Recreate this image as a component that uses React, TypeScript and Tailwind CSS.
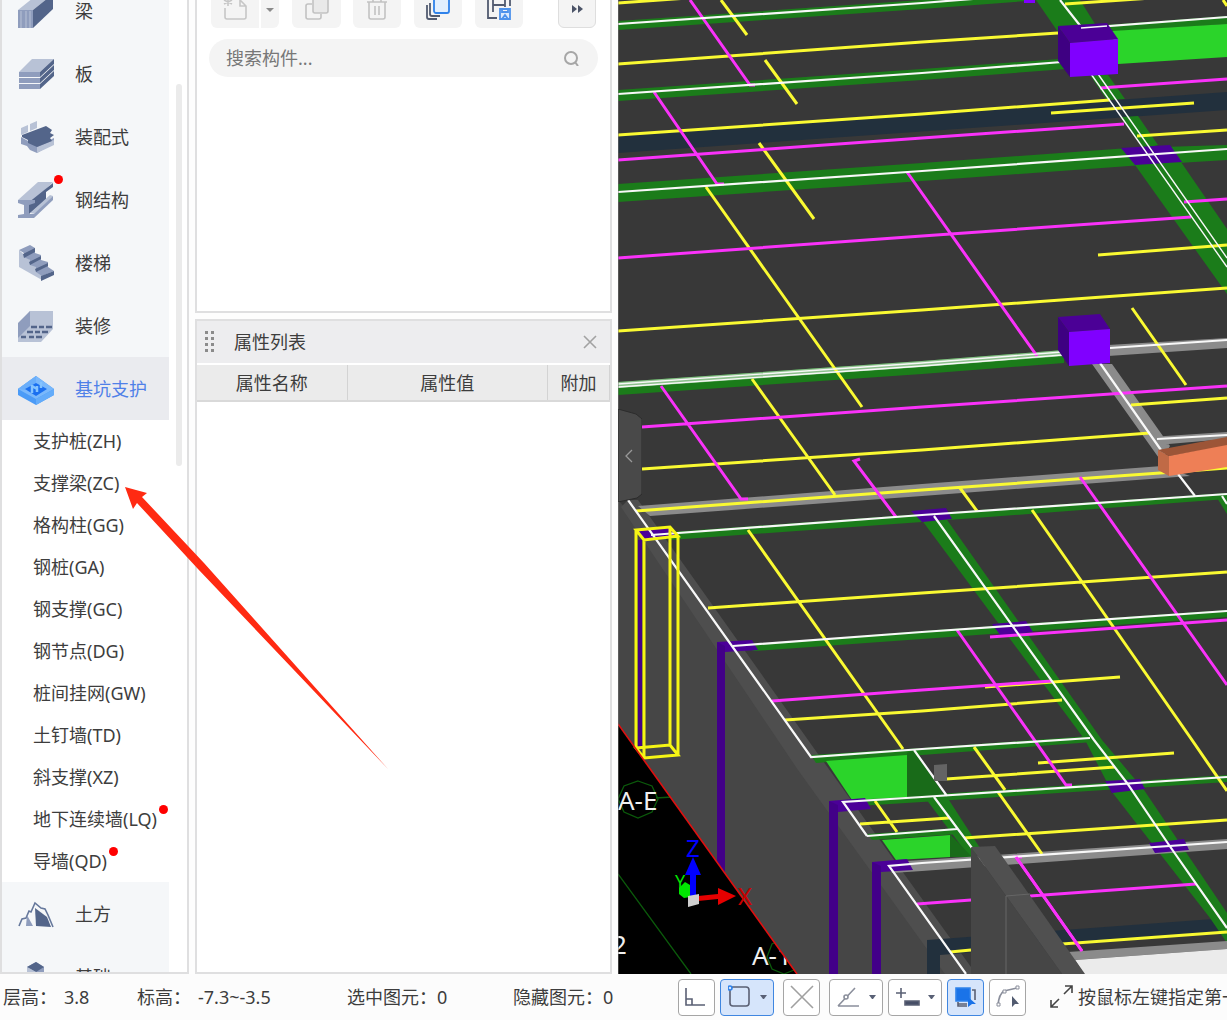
import type { ReactNode } from 'react';
import clsx from 'clsx';

const LIGHT = '#b8c2d6';
const MID = '#8f9dbd';
const DARK = '#53658a';

const icons: Record<string, ReactNode> = {
  beam: (
    <>
      <path d="M0 17 20 1h15L15 17z" fill={LIGHT} />
      <path d="M15 17 35 1v15L15 35z" fill={DARK} />
      <path d="M0 17h15v18H0z" fill={MID} />
      <path d="M3 18v17M8 18v17M12 18v17" stroke={LIGHT} strokeWidth="1" />
    </>
  ),
  slab: (
    <>
      <path d="M1 16 14 3h22L22 16z" fill={LIGHT} />
      <path d="M1 16h21v5H1zM1 22h21v5H1zM1 28h21v5H1z" fill={MID} />
      <path d="M22 16 36 3v5L22 21zM22 22 36 9v5L22 27zM22 28 36 15v5L22 33z" fill={DARK} />
    </>
  ),
  prefab: (
    <>
      <path d="M3 9l7-3v7l-7 3zM12 5l7-3v7l-7 3z" fill={LIGHT} />
      <path d="M3 18l16 9 17-8v5l-17 10-7-3-3-4-6-2z" fill={MID} />
      <path d="M19 28l17-7v5l-17 8z" fill={LIGHT} />
      <path d="M4 16 28 7l6 4-2 3 4 2-4 3 2 3-15 6-9-4v-3l-6-3z" fill={DARK} />
    </>
  ),
  steel: (
    <>
      <path d="M0 18 20 0h15L17 18z" fill={LIGHT} />
      <path d="M10 21 35 1v4l-7 5v8L11 32z" fill={DARK} />
      <path d="M0 18h17v3l-6 2v9h5v4H0v-3l6-1v-9l-6-2z" fill={MID} />
      <path d="M12 31 32 13l3 1-18 18z" fill={LIGHT} />
      <path d="M16 32 35 14v4L16 36z" fill={MID} />
    </>
  ),
  stairs: (
    <>
      <path d="M1 5v17l23 13v-9z" fill={LIGHT} />
      <path d="M1 5 12 0l5 3v5l6 2v5l7 2v5l6 4-12 5-6-4v-5l-6-2v-5l-6-3V8z" fill={MID} />
      <path d="M5 9l12-6v4L6 13zM11 17l12-6v3l-11 6zM17 24l13-6v3l-12 6zM23 31l13-5v4l-13 6z" fill={DARK} />
    </>
  ),
  finish: (
    <>
      <path d="M12 3h23v18L23 34H0V19z" fill={LIGHT} />
      <path d="M12 3v15L0 30V15z" fill={MID} />
      <path
        d="M13 19h6M21 19h5M28 19h6M9 24h6M17 24h5M24 24h6M3 29h5M11 29h5M18 29h6"
        stroke={DARK}
        strokeWidth="2.5"
      />
    </>
  ),
  pit: (
    <>
      <path d="M0 18 18 5l18 13v6L18 34 0 24z" fill="#4b9bf7" />
      <path d="M0 18 18 5l18 13-18 10z" fill="#7ab8fb" />
      <path d="M18 5v10L7 19l-7-1z" fill="#6aaefa" />
      <path d="M7 18l11-6 11 6-11 7z" fill="#1a6ff0" />
      <path d="M14 14v8M19 15v6M23 11v6M14 15l5 3" stroke="#84c3ff" strokeWidth="2.5" />
      <path d="M18 28 36 18v6L18 34z" fill="#64acfa" />
    </>
  ),
  earth: (
    <>
      <path d="M1 30l3-7 4-1 3-7 2 1 4-9 6 5 4 1 3 6 5 12" fill="none" stroke="#66789c" strokeWidth="1.6" />
      <path d="M17 12l8 6 4 3 4 10-15-1z" fill={DARK} />
      <path d="M9 19l6 11H8z" fill={MID} />
    </>
  ),
  foundation: (
    <>
      <path d="M9 8l9-5 8 5v14H9z" fill={MID} />
      <path d="M9 8l9-5 8 5-8 5z" fill={DARK} />
      <path d="M9 8l9 5v9H9z" fill={LIGHT} />
    </>
  ),
};

const categories = [
  { icon: 'beam', label: '梁' },
  { icon: 'slab', label: '板' },
  { icon: 'prefab', label: '装配式' },
  { icon: 'steel', label: '钢结构', isNew: true },
  { icon: 'stairs', label: '楼梯' },
  { icon: 'finish', label: '装修' },
  { icon: 'pit', label: '基坑支护', active: true },
];

const pitItems = [
  { label: '支护桩(ZH)' },
  { label: '支撑梁(ZC)' },
  { label: '格构柱(GG)' },
  { label: '钢桩(GA)' },
  { label: '钢支撑(GC)' },
  { label: '钢节点(DG)' },
  { label: '桩间挂网(GW)' },
  { label: '土钉墙(TD)' },
  { label: '斜支撑(XZ)' },
  { label: '地下连续墙(LQ)', isNew: true },
  { label: '导墙(QD)', isNew: true },
];

function NewDot({ className }: { className?: string }) {
  return <span className={clsx('absolute size-[9px] rounded-full bg-[#ff0000]', className)} />;
}

type CategoryProps = { icon: string; label: string; isNew?: boolean; active?: boolean };

function Category({ icon, label, isNew, active }: CategoryProps) {
  return (
    <button
      className={clsx(
        'flex h-[63px] w-full shrink-0 items-center pl-4 text-left',
        active ? 'bg-[#eaebef] text-[#4f80e8]' : 'bg-[#f5f7f9]'
      )}
    >
      <span className="relative mr-[21px]">
        <svg className="size-9" viewBox="0 0 36 36">{icons[icon]}</svg>
        {isNew && <NewDot className="-top-[7px] left-9" />}
      </span>
      {label}
    </button>
  );
}

function Sidebar() {
  return (
    <nav className="flex w-[189px] shrink-0 overflow-hidden border-2 border-t-0 border-[#dfdfe0] bg-white">
      <div className="-mt-[21px] flex w-[167px] flex-col">
        {categories.map((c) => (
          <Category key={c.label} {...c} />
        ))}
        <ul className="shrink-0 pl-[31px]">
          {pitItems.map((item) => (
            <li key={item.label} className="flex h-[42px] items-center">
              <button className="relative whitespace-nowrap">
                {item.label}
                {item.isNew && <NewDot className="-right-[11px] -top-[2px]" />}
              </button>
            </li>
          ))}
        </ul>
        <Category icon="earth" label="土方" />
        <Category icon="foundation" label="基础" />
      </div>
      <div className="ml-[7px] mt-[84px] h-[382px] w-[6px] rounded-full bg-[#ebebeb]" />
    </nav>
  );
}

function ToolButton({ label, className, children }: { label: string; className?: string; children: ReactNode }) {
  return (
    <button aria-label={label} className={clsx('flex h-[40px] items-end justify-center rounded-md bg-[#f4f4f4] pb-2', className)}>
      {children}
    </button>
  );
}

function ComponentPanel() {
  return (
    <section className="h-[313px] shrink-0 overflow-hidden border-2 border-t-0 border-[#dfdfe0] bg-white px-3">
      <div className="-mt-3 flex px-[2px]">
        <ToolButton label="新建" className="w-12 rounded-r-none">
          <svg className="h-6 w-6" viewBox="0 0 24 24" fill="none" stroke="#c6c6c6" strokeWidth="1.6">
            <path d="M2 12v9q0 2 2 2h17q2 0 2-2V10l-6-6M17 4v6h6M1 4l8 4M9 4l-8 4M5 2v8" />
          </svg>
        </ToolButton>
        <ToolButton label="更多新建" className="ml-[2px] w-[18px] rounded-l-none">
          <svg className="mb-2 h-1 w-2" viewBox="0 0 8 4"><path d="M0 0h8L4 4z" fill="#8a8a8a" /></svg>
        </ToolButton>
        <ToolButton label="复制" className="ml-[13px] w-[49px]">
          <svg className="h-6 w-6" viewBox="0 0 24 24" fill="#e9e9e9" stroke="#c2c2c2" strokeWidth="1.6">
            <path d="M7 8H3q-2 0-2 2v11q0 2 2 2h11q2 0 2-2v-3" fill="none" />
            <rect x="8" y="1" width="15" height="16" rx="2" />
          </svg>
        </ToolButton>
        <ToolButton label="删除" className="ml-3 w-12">
          <svg className="h-6 w-5" viewBox="0 0 20 24" fill="none" stroke="#c2c2c2" strokeWidth="1.6">
            <path d="M0 6h20M2 6v15q0 2 2 2h12q2 0 2-2V6M6 6V2h8v4M8 10v9M12 10v9" />
          </svg>
        </ToolButton>
        <ToolButton label="层间复制" className="ml-[13px] w-12">
          <svg className="h-6 w-6" viewBox="0 0 24 24" fill="none" stroke="#525b70" strokeWidth="1.8">
            <path d="M1 9v12q0 2 2 2h8M4 7v11q0 2 2 2h8" />
            <rect x="8" y="0" width="15" height="17" rx="2" fill="#e2effe" stroke="#2f82ea" />
          </svg>
        </ToolButton>
        <ToolButton label="存档" className="ml-[13px] w-12">
          <svg className="h-6 w-6" viewBox="0 0 24 24" fill="none" stroke="#525b70" strokeWidth="1.8">
            <path d="M1 0v22h9M6 0v16M6 9h12M18 2v9M23 0v10" />
            <path d="M13 13h10v10H13zM15 13v3h6v-3M15 23l3-4 3 4" fill="#dceafd" stroke="#4d92ec" />
          </svg>
        </ToolButton>
        <ToolButton label="展开" className="ml-auto w-[38px] border border-[#dedede]">
          <svg className="mb-[6px] h-2 w-[11px]" viewBox="0 0 11 8"><path d="M0 0l5 4-5 4zM6 0l5 4-5 4z" fill="#4c5468" /></svg>
        </ToolButton>
      </div>
      <div className="mt-[11px] flex h-[38px] items-center rounded-full bg-[#f4f4f4] px-[17px]">
        <input
          aria-label="搜索构件"
          placeholder="搜索构件..."
          className="min-w-0 flex-1 bg-transparent outline-none placeholder:text-[#777]"
        />
        <svg className="mr-[2px] size-[15px]" viewBox="0 0 15 15" fill="none" stroke="#a6a6a6" strokeWidth="2">
          <circle cx="7" cy="7" r="6" />
          <path d="M11 11l3 4" />
        </svg>
      </div>
    </section>
  );
}

function PropertyPanel() {
  return (
    <section className="mt-[6px] min-h-0 flex-1 border-2 border-[#dfdfe0] bg-white">
      <header className="flex h-[42px] items-center bg-[#ededef] pl-2 pr-3">
        <svg className="mr-[18px] h-[22px] w-[11px]" viewBox="0 0 11 22" fill="#8b8b8b">
          <path d="M0 0h3v3H0zM6 0h3v3H6zM0 6h3v3H0zM6 6h3v3H6zM0 12h3v3H0zM6 12h3v3H6zM0 18h3v3H0zM6 18h3v3H6z" />
        </svg>
        <h2>属性列表</h2>
        <button aria-label="关闭" className="ml-auto">
          <svg className="size-4" viewBox="0 0 16 16" stroke="#a2a2a2" strokeWidth="1.6"><path d="M2 2l12 12M14 2 2 14" /></svg>
        </button>
      </header>
      <table className="mt-[2px] w-full table-fixed border-collapse bg-[#ebebeb]">
        <thead>
          <tr className="h-[36px] border-b-2 border-[#d9d9d9]">
            <th scope="col" className="w-[150px] border-r border-[#d3d3d3] font-normal">属性名称</th>
            <th scope="col" className="border-r border-[#d3d3d3] font-normal">属性值</th>
            <th scope="col" className="w-[62px] border-r border-[#d3d3d3] font-normal">附加</th>
          </tr>
        </thead>
      </table>
    </section>
  );
}

const PURPLE = '#4b0098';
const GREEN = '#1b7c1a';
const BRIGHT = '#2bd42a';
const GRAY = '#8b8b8b';

// Model space view: ground and slabs first, then beams, rebar lines and columns.
function Model() {
  return (
    <svg className="absolute inset-0 h-full w-full" viewBox="618 0 609 974" preserveAspectRatio="xMinYMin slice">
      {/* ground with axis labels */}
      <path d="M618 0h609v974H618z" />
      <g fill="none" stroke="#0b5a0b" strokeWidth="1.3">
        <path d="M638 781l14 5 6 13-6 13-14 6-14-6-6-13 6-13zM656 798l16-1M618 874l73 100M784 939l-12 5-5 13 5 12 12 5 10-4" />
      </g>
      <g fill="#f0f0f0" fontSize="26">
        <text x="618" y="810">A-E</text>
        <text x="752" y="965">A-1</text>
        <text x="612" y="954">2</text>
      </g>

      {/* floor and outer wall */}
      <path d="M618 0h609v974H797L618 724z" fill="#383838" />
      <path d="M618 500 650 535 960 974H797L618 724z" fill="#464646" />
      <path d="M621 507 628 500h10L818 754 976 974h-31L798 770z" fill="#4e4e4e" />

      <g fill="#22303d">
        <path d="M618 136 1227 92v18L618 153z" />
        <path d="M927 940l300-22v14L940 955v19h-13z" />
      </g>

      <g fill={GREEN}>
        <path d="M618 21 922 0l105-8v9L922 9 618 30z" />
        <path d="M618 90 922 69l138-10 6 10-144 11-304 21z" />
        <path d="M618 184 922 163l207-15 98-3v15l-98 6-207 15-304 21z" />
        <path d="M618 382 922 361l142-11v13L922 374 618 395z" />
        <path d="M1036 0h44l15 24-37 8zM1106 25l121-9v8l-121 8z" />
        <path d="M1090 75h18l17 24-18 1zM1122 117l16-1 20 29-14 4zM1135 165l46-3 46 67v65z" />
        <path d="M670 532 922 514l305-21v6L922 522 670 540z" />
        <path d="M735 646 922 631l305-21v7L922 639 755 651z" />
        <path d="M921 519 945 517l157 223 42 50 83 123v30l-17-25-98-126-27-52z" />
        <path d="M1217 498h10v16z" />
        <path d="M811 755 922 748l168-12 3 6-171 13-106 8z" />
        <path d="M852 800 922 795l305-20v7L922 802l-64 4z" />
        <path d="M926 799l21-2 33 51-9 11zM867 834l90-6v6l-85 6z" />
      </g>
      <path d="M907 753l7-3 31 46-38 2zM950 834l22 23h-22z" fill="#196b19" />
      <path d="M1112 31 1227 24v33l-109 7zM826 761l81-6v42l-55 3zM882 840l68-5v22l-54 3z" fill={BRIGHT} />

      <g fill={GRAY}>
        <path d="M638 506 922 484l240-18 28 10-268 20-272 20z" />
        <path d="M1108 345 1227 338v10l-119 8zM1092 364h20l58 82-9 15zM1150 437l77-5v7l-70 6z" />
        <path d="M889 862 922 860l305-21v10L922 871l-30 2zM1068 952l159-11v8l-153 11z" />
      </g>
      <path d="M1075 960 1227 949v25H1084z" fill="#ebebeb" />
      <path d="M618 385 922 364l142-11" stroke="#8cc08c" strokeWidth="6" fill="none" />

      <g fill={PURPLE}>
        <path d="M1024 0h11v3h-11z" fill="#8000ff" />
        <path d="M1121 148 1170 145l12 17-47 3z" />
        <path d="M911 511l35-3 6 11-30 3zM992 624l34-3 7 11-32 4zM1105 781l35-2 5 10-33 4zM1149 843l35-4 5 11-34 3z" />
        <path d="M638 531l32-3 6 9-32 3zM717 642l35-2 6 10-33 2zM829 801l36-3 6 11-33 3zM872 862l35-3 6 11-32 2z" />
        <path d="M638 540h4v208h-4zM717 642l8 4v227l-8-12zM829 801l9 4v169h-9zM872 862l9 4v108h-9z" fill="#420088" />
      </g>

      <g fill="none" stroke="#fafa32" strokeWidth="3">
        <path d="M618 3 688-2M618 64 922 42l136-9M618 135 922 114l188-14M1051 113 1194 103M1065 4l87-6M1223 0l4 6" />
        <path d="M721 0l26 35M765 60l32 44M759 143l55 76M706 187l156 220M1137 136l90-6M1098 255l129-10" />
        <path d="M618 331 922 310l305-22M642 469 922 450l228-17M752 379l83 116M1132 308l54 77M1131 405l96-7" />
        <path d="M636 511 922 490l238-17 67-5M960 488l17 23M748 530 903 749M708 608 922 593l305-21M1032 510l160 230 35 51" />
        <path d="M785 720l137-9 140-11M985 687l135-10M1038 763l136-10M946 779l169-12M974 747l31 43M998 792l44 62" />
        <path d="M875 801l22 31M860 824l89-6M964 838l263-18M950 952l21-2M1062 944l165-12" />
      </g>

      <g fill="none" stroke="#fa32fa" strokeWidth="3">
        <path d="M690 0l60 85h5M618 160 922 138l202-14M654 92l63 92h7M618 258 922 236l269-19M1184 202l43-3M1100 88l127-9" />
        <path d="M907 172l130 184M642 427 922 407l305-21M661 386l80 113h7M860 459l-6 2 42 56M1080 477l147 208" />
        <path d="M990 637l237-17M772 701 922 690l130-9M957 630l109 155h6M917 904l54-4M1030 896l166-12M1022 857h-6l66 94" />
      </g>

      <g fill="none" stroke="#f8f8f8" strokeWidth="2.200">
        <path d="M618 24 922 3l100-8M618 94 922 73l140-11M618 192 922 171l305-22M1060 0l22 28 145-11" />
        <path d="M1091 74l136 193M1098 74l129 184M618 384 922 363l140-11M618 387 922 366l140-11" strokeWidth="1.4" />
        <path d="M1110 348l117-8M1100 363l61 87M1157 439l70-4M1178 474l17 22M1222 496l5 8" />
        <path d="M628 500 811 757l111-8 168-11M651 535l271-20 305-21M733 646l189-14 305-21M934 516l160 224 33 43 42 62 58 83" />
        <path d="M914 750l33 46M867 836l90-7M867 836l-24-34 79-5 305-20M934 797l38 51M966 974 889 866l33-3 305-21" />
      </g>

      {/* solid columns and the picked beam */}
      <path d="M1058 26l49-3 11 16-48 4z" fill="#4b0096" />
      <path d="M1058 26l12 17v34l-12-16z" fill="#3e0082" />
      <path d="M1070 43l48-4v35l-48 3z" fill="#8000ff" />
      <path d="M1081 28l26-2" stroke="#f8f8f8" strokeWidth="1.6" />
      <path d="M1058 317l42-3 10 15-41 3z" fill="#4b0096" />
      <path d="M1058 317l11 15v34l-11-16z" fill="#3e0082" />
      <path d="M1069 332l41-3v34l-41 3z" fill="#8000ff" />
      <path d="M1158 450l69-13v9l-58 10z" fill="#9c5537" />
      <path d="M1158 450l11 6v20l-11-6z" fill="#c06a46" />
      <path d="M1169 456l58-11v22l-58 9z" fill="#ee7f56" />
      <path d="M934 765l13-1v17h-13z" fill="#646464" />
      <path d="M971 847l91 127h-91z" fill="#464646" />
      <path d="M971 847l24-1 90 128h-23z" fill="#505050" />
      <path d="M1006 896l56 78h-56z" fill="#464646" />
      <path d="M1006 974v-78l24-2" fill="none" stroke="#666" />
      <path d="M1016 857l66 94" stroke="#fa32fa" strokeWidth="3" />

      <path
        d="M636 530l34-3 8 9-34 4zM636 748l34-3 8 10-34 3zM636 530v218M670 527v218M678 536v219M644 540v218"
        fill="none"
        stroke="#f5f514"
        strokeWidth="3"
      />

      <path d="M618 724 797 974" stroke="#e01010" strokeWidth="1.6" />

      {/* axis tripod */}
      <path d="M690 898v-23h-5l8-18 8 18h-5v23z" fill="#0000ff" />
      <path d="M698 896l20-2v-6l18 8-18 9v-6l-20 2z" fill="#e60000" />
      <path d="M679 888l6-6 5 3v12l-6 1-5-4z" fill="#00e600" />
      <path d="M688 896l11-2v10l-11 3z" fill="#cfcfcf" />
      <g fontSize="24">
        <text x="686" y="857" fill="#0000ff">Z</text>
        <text x="738" y="905" fill="#c80000">X</text>
      </g>
      <text x="675" y="888" fontSize="18" fill="#00e600">Y</text>
      <path d="M618 0v974" stroke="#777" />
    </svg>
  );
}

function Viewport() {
  return (
    <main className="relative ml-[6px] min-w-0 flex-1 overflow-hidden">
      <Model />
      <button aria-label="收起" className="absolute left-0 top-[409px]">
        <svg className="h-[93px] w-6" viewBox="0 0 24 93" fill="none">
          <path d="M0 0l18 5 6 5v75l-5 4-19 4z" fill="#494949" stroke="#2c2c2c" />
          <path d="M14 41l-6 6 6 6" stroke="#999" strokeWidth="1.3" />
        </svg>
      </button>
    </main>
  );
}

type StatusButtonProps = { label: string; active?: boolean; menu?: boolean; className?: string; children: ReactNode };

function StatusButton({ label, active, menu, className, children }: StatusButtonProps) {
  return (
    <button
      aria-label={label}
      className={clsx(
        'flex h-[37px] shrink-0 items-center justify-center gap-2 rounded-[4px] border',
        menu ? 'w-[54px]' : 'w-[37px]',
        active ? 'border-[#3f86e0] bg-[#d6e5fb]' : 'border-[#a5a5a5] bg-white',
        className
      )}
    >
      <StatusIcon>{children}</StatusIcon>
      {menu && <svg className="h-1 w-[7px]" viewBox="0 0 7 4"><path d="M0 0h7L4 4H3z" fill="#596075" /></svg>}
    </button>
  );
}

function StatusIcon({ children }: { children: ReactNode }) {
  return (
    <svg className="size-6 shrink-0" viewBox="0 0 24 24" fill="none" stroke="#5a6074" strokeWidth="1.6">
      {children}
    </svg>
  );
}

function StatusBar() {
  return (
    <footer className="flex h-[46px] shrink-0 items-center overflow-hidden whitespace-nowrap bg-[#fcfcfc] pl-[3px]">
      <dl className="flex w-[675px] shrink-0">
        <div className="flex w-[134px] gap-[7px]"><dt>层高：</dt><dd>3.8</dd></div>
        <div className="flex w-[210px] gap-[7px]"><dt>标高：</dt><dd>-7.3~-3.5</dd></div>
        <div className="flex w-[166px]"><dt>选中图元：</dt><dd>0</dd></div>
        <div className="flex"><dt>隐藏图元：</dt><dd>0</dd></div>
      </dl>
      <div className="flex gap-[5px]">
        <StatusButton label="正交">
          <path d="M1 3v17h19M1 14h6v6" />
        </StatusButton>
        <StatusButton label="矩形选择" active menu>
          <rect x="2" y="2" width="19" height="19" rx="3" />
          <circle cx="2" cy="3" r="2" fill="#d6e5fb" stroke="#2f82ea" />
        </StatusButton>
        <StatusButton label="取消" className="mx-1">
          <path d="M1 1l22 22M23 1 1 23" stroke="#a0a0a0" />
        </StatusButton>
        <StatusButton label="角度" menu>
          <path d="M1 21 18 3M1 21h21" stroke="#8b8f9c" />
          <circle cx="9" cy="12" r="2" fill="#fff" stroke="#8b8f9c" />
        </StatusButton>
        <StatusButton label="偏移" menu>
          <path d="M5 3v10M0 8h10" />
          <path d="M9 16h14v4H9z" fill="#464e66" />
        </StatusButton>
        <StatusButton label="显示选中" active>
          <path d="M4 17v4h9M18 5h3v10M4 19h9" />
          <path d="M2 3h14v13H2z" fill="#1a73e8" stroke="#2f82ea" />
          <path d="M14 12l8 7h-4l-4 3z" fill="#1a73e8" stroke="none" />
        </StatusButton>
        <StatusButton label="编辑多段线">
          <path d="M2 20Q3 9 8 6l13-3" stroke="#8b8f9c" />
          <path d="M1 18h3v3H1zM7 5h3v3H7zM20 1h3v3h-3z" fill="#fff" stroke="#8b8f9c" strokeWidth="1" />
          <path d="M16 11l7 8h-4l-3 3z" fill="#525b70" stroke="none" />
        </StatusButton>
      </div>
      <p className="ml-6 flex items-center gap-1">
        <StatusIcon><path d="M14 9 22 1M15 1h7v7M9 14 1 22M1 15v7h7" stroke="#444" /></StatusIcon>
        按鼠标左键指定第一个点
      </p>
    </footer>
  );
}

export default function App() {
  return (
    <div className="relative flex h-screen flex-col overflow-hidden bg-[#fdfdfd] font-['Noto_Sans','Noto_Sans_CJK_SC',sans-serif] text-[18px] leading-6 text-[#3d3d3d]">
      <div className="flex min-h-0 flex-1">
        <Sidebar />
        <div className="ml-[6px] flex w-[417px] shrink-0 flex-col">
          <ComponentPanel />
          <PropertyPanel />
        </div>
        <Viewport />
      </div>
      <StatusBar />
      {/* callout arrow pointing at 支撑梁 */}
      <svg className="pointer-events-none absolute left-[125px] top-[487px] h-[284px] w-[264px]" viewBox="0 0 264 284">
        <path d="M0 0l22 6-5 4 62 66 184 206L73 82 12 16l-4 6z" fill="#ff2a12" />
      </svg>
    </div>
  );
}
